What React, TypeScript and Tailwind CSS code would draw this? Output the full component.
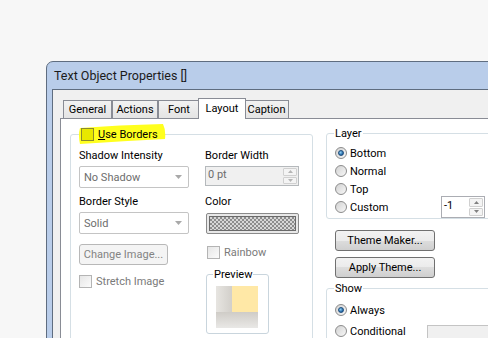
import React from 'react';

function Checkbox({ label, disabled, tone }: { label: React.ReactNode; disabled?: boolean; tone?: 'yellow' }) {
  const box =
    tone === 'yellow'
      ? 'border-[#8a8a2e] bg-[#e8e800]'
      : 'border-[#b4b4b4] bg-[linear-gradient(135deg,#e6e6e6,#fbfbfb)]';
  return (
    <div className="flex items-center gap-[4px] h-[15px]">
      <span className={`w-[13px] h-[13px] border ${box}`} />
      <span className={disabled ? 'text-[#7a7a7a]' : 'text-black'}>{label}</span>
    </div>
  );
}

function Radio({ label, checked }: { label: string; checked?: boolean }) {
  return (
    <div className="flex items-center gap-[3px]">
      <span className="w-[12px] h-[12px] rounded-full border border-[#8c8c8c] bg-[linear-gradient(135deg,#d2d2d2,#f7f7f7)] flex items-center justify-center">
        {checked && (
          <span className="w-[6px] h-[6px] rounded-full bg-[radial-gradient(circle_at_35%_35%,#8fd0f5,#1b5f9f_75%)] border border-[#1d4c7c]" />
        )}
      </span>
      <span className="text-black">{label}</span>
    </div>
  );
}

function Combo({ value }: { value: string }) {
  return (
    <div className="w-[110px] h-[22px] border border-[#c4c4c4] rounded-[2px] bg-white flex items-center pl-[4px] pr-[6px] text-[#6d6d6d]">
      <span className="flex-1">{value}</span>
      <svg width="7" height="4" viewBox="0 0 7 4">
        <path d="M0 0 H7 L3.5 4 Z" fill="#a9a9a9" />
      </svg>
    </div>
  );
}

function SpinButtons({ disabled }: { disabled?: boolean }) {
  const arrow = disabled ? '#b5b5b5' : '#808080';
  return (
    <div className="flex flex-col gap-[1px] w-[15px] h-full py-[1px] pr-[1px]">
      <div className="flex-1 border border-[#d0d0d0] bg-[#f4f4f4] flex items-center justify-center rounded-[1px]">
        <svg width="5" height="3" viewBox="0 0 5 3">
          <path d="M0 3 H5 L2.5 0 Z" fill={arrow} />
        </svg>
      </div>
      <div className="flex-1 border border-[#d0d0d0] bg-[#f4f4f4] flex items-center justify-center rounded-[1px]">
        <svg width="5" height="3" viewBox="0 0 5 3">
          <path d="M0 0 H5 L2.5 3 Z" fill={arrow} />
        </svg>
      </div>
    </div>
  );
}

function WinButton({ label, disabled, width }: { label: string; disabled?: boolean; width: string }) {
  return (
    <div
      className={`${width} h-[21px] rounded-[3px] border flex items-center justify-center ${
        disabled
          ? 'border-[#b8b8b8] bg-[#f4f4f4] text-[#838383]'
          : 'border-[#707070] bg-[linear-gradient(#f2f2f2,#ebebeb_50%,#dddddd_50%,#cfcfcf)] text-black'
      }`}
    >
      {label}
    </div>
  );
}

function Tab({ label, width, active }: { label: string; width: string; active?: boolean }) {
  if (active) {
    return (
      <div className={`${width} h-[21px] -mb-[1px] -mx-[2px] relative z-10 bg-white border border-b-0 border-[#898c95] flex justify-center pt-[2px]`}>
        {label}
      </div>
    );
  }
  return (
    <div className={`${width} h-[18px] border border-b-0 border-[#898c95] bg-[linear-gradient(#f2f2f2,#e4e4e4)] flex items-center justify-center`}>
      {label}
    </div>
  );
}

function PreviewImage() {
  return (
    <svg width="42" height="42" viewBox="0 0 42 42" className="block">
      <defs>
        <linearGradient id="lft" x1="0" x2="1" y1="0" y2="0">
          <stop offset="0" stopColor="#e7e5e1" />
          <stop offset="1" stopColor="#d2cfca" />
        </linearGradient>
        <linearGradient id="btm" x1="0" x2="0" y1="0" y2="1">
          <stop offset="0" stopColor="#cfccc7" />
          <stop offset="1" stopColor="#e9e8e6" />
        </linearGradient>
      </defs>
      <rect width="42" height="42" fill="#ecebe8" />
      <rect x="0" y="0" width="16" height="26" fill="url(#lft)" />
      <rect x="0" y="26" width="42" height="16" fill="url(#btm)" />
      <rect x="16" y="0" width="26" height="26" fill="#ffe8a6" />
    </svg>
  );
}

export default function App() {
  return (
    <div className="w-[488px] h-[338px] overflow-hidden bg-[#f7f7f7] pl-[46px] pt-[61px] font-[Roboto,sans-serif] text-[11px] leading-[15px] text-black">
      <div className="w-[480px] h-[300px] border border-[#5f6d80] rounded-tl-[7px] bg-[#b9cdea]">
        <div className="h-[27px] pl-[7px] flex items-center text-[12.5px] text-[#1b1b1b]">Text Object Properties []</div>
        <div className="pl-[5px] h-full">
          <div className="h-full border-l border-t border-[#5f6d80] bg-[#f0f0f0] pl-[7px]">
            <div className="flex items-end pt-[8px] pl-[3px]">
              <Tab label="General" width="w-[49px]" />
              <Tab label="Actions" width="w-[46px]" />
              <Tab label="Font" width="w-[42px]" />
              <Tab label="Layout" width="w-[48px]" active />
              <Tab label="Caption" width="w-[45px]" />
            </div>
            <div className="h-full border-l border-t border-[#898c95] bg-white pt-[8px] pl-[9px] flex gap-[13px]">
              {/* left group */}
              <fieldset className="w-[243px] h-[230px] shrink-0 border border-[#d5dfe5] rounded-[3px] pl-[8px]">
                <legend className="px-[2px] relative">
                  <svg className="absolute left-0 -top-[3px]" width="88" height="21" viewBox="0 0 88 21">
                    <path d="M1 4 Q40 1 84 0 Q87 6 86 15 Q44 17 1 20 Q-1 11 1 4 Z" fill="#ffff1e" />
                  </svg>
                  <span className="relative">
                    <Checkbox tone="yellow" label={<><span className="underline">U</span>se Borders</>} />
                  </span>
                </legend>
                <div className="flex pt-[6px]">
                  <div className="w-[110px] flex flex-col">
                    <div>Shadow Intensity</div>
                    <div className="mt-[3px]"><Combo value="No Shadow" /></div>
                    <div className="mt-[6px]">Border Style</div>
                    <div className="mt-[3px]"><Combo value="Solid" /></div>
                    <div className="mt-[10px]"><WinButton label="Change Image..." width="w-[89px]" disabled /></div>
                    <div className="mt-[9px]"><Checkbox label="Stretch Image" disabled /></div>
                  </div>
                  <div className="ml-[16px] w-[96px] flex flex-col">
                    <div>Border Width</div>
                    <div className="mt-[3px] w-[94px] h-[20px] border border-[#b5b9bc] bg-[#f0f0f0] flex">
                      <span className="flex-1 pl-[2px] text-[#6d6d6d] leading-[16px]">0 pt</span>
                      <SpinButtons disabled />
                    </div>
                    <div className="mt-[8px]">Color</div>
                    <div className="mt-[4px] ml-[1px] w-[93px] h-[21px] border border-[#8a8a8a] rounded-[2px] p-[2px] bg-[#e8e8e8]">
                      <div className="w-full h-full border border-[#6a6a6a] bg-[image:repeating-conic-gradient(#8c8c8c_0%_25%,#d6d6d6_0%_50%)] bg-[length:4px_4px]" />
                    </div>
                    <div className="mt-[11px] ml-[2px]"><Checkbox label="Rainbow" disabled /></div>
                    <fieldset className="mt-[7px] ml-[1px] w-[63px] h-[67px] border border-[#c9d5dd] rounded-[3px] pl-[6px]">
                      <legend className="px-[1px]">Preview</legend>
                      <div className="mt-[4px] ml-[3px]"><PreviewImage /></div>
                    </fieldset>
                  </div>
                </div>
              </fieldset>
              {/* right column */}
              <div className="w-[200px] shrink-0 flex flex-col">
                <fieldset className="w-[200px] border border-[#d5dfe5] rounded-[3px] pl-[8px] -mt-[1px]">
                  <legend className="-ml-[1px] px-[1px]">Layer</legend>
                  <div className="pt-[3px] flex flex-col">
                    <div className="h-[18px] flex items-center"><Radio label="Bottom" checked /></div>
                    <div className="h-[18px] flex items-center"><Radio label="Normal" /></div>
                    <div className="h-[18px] flex items-center"><Radio label="Top" /></div>
                    <div className="h-[22px] -mt-[2px] flex items-center">
                      <div className="w-[106px]"><Radio label="Custom" /></div>
                      <div className="w-[44px] h-[22px] border border-[#abadb3] bg-white flex">
                        <span className="flex-1 pl-[2px] leading-[18px]">-1</span>
                        <SpinButtons />
                      </div>
                    </div>
                  </div>
                </fieldset>
                <div className="mt-[11px] ml-[9px]"><WinButton label="Theme Maker..." width="w-[100px]" /></div>
                <div className="mt-[6px] ml-[9px]"><WinButton label="Apply Theme..." width="w-[100px]" /></div>
                <fieldset className="mt-[3px] w-[200px] h-[80px] border border-[#d5dfe5] rounded-[3px] pl-[8px]">
                  <legend className="-ml-[1px] px-[1px]">Show</legend>
                  <div className="pt-[5px] flex flex-col">
                    <div className="h-[18px] flex items-center"><Radio label="Always" checked /></div>
                    <div className="mt-[3px] h-[18px] flex items-center">
                      <div className="w-[92px]"><Radio label="Conditional" /></div>
                      <div className="w-[80px] h-[22px] mt-[10px] border border-[#c4c4c4] bg-[#f0f0f0]" />
                    </div>
                  </div>
                </fieldset>
              </div>
            </div>
          </div>
        </div>
      </div>
    </div>
  );
}
